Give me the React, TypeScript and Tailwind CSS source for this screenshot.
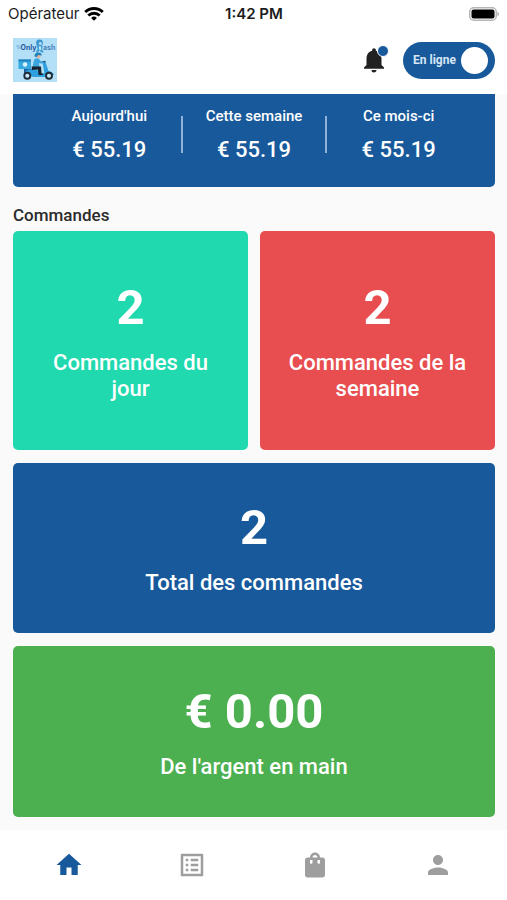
import { useState } from "react";
import clsx from "clsx";
import { MdHome, MdListAlt, MdNotifications, MdPerson, MdShoppingBag } from "react-icons/md";
import type { IconType } from "react-icons";

const earnings = [
	{ label: "Aujourd'hui", amount: "€ 55.19" },
	{ label: "Cette semaine", amount: "€ 55.19" },
	{ label: "Ce mois-ci", amount: "€ 55.19" },
];

const tabs: { id: string; label: string; icon: IconType }[] = [
	{ id: "home", label: "Accueil", icon: MdHome },
	{ id: "requests", label: "Demandes", icon: MdListAlt },
	{ id: "orders", label: "Commandes", icon: MdShoppingBag },
	{ id: "profile", label: "Profil", icon: MdPerson },
];

const StatusBar = () => (
	<div className="grid h-7 grid-cols-3 items-center bg-white pr-[7px] pl-2 font-['Inter',sans-serif] text-[15px] text-[#1c1c1c]">
		<div className="flex items-center gap-1">
			<span>Opérateur</span>
			<svg viewBox="0 0 20 14" className="h-3.5 w-5 shrink-0" fill="none" stroke="#000" strokeWidth="2.8">
				<path d="M1.2 5.1a12.6 12.6 0 0 1 17.6 0" />
				<path d="M4.3 8.6a8.1 8.1 0 0 1 11.4 0" />
				<path d="M10 13.8 7.1 10.9a4.1 4.1 0 0 1 5.8 0z" fill="#000" stroke="none" />
			</svg>
		</div>
		<span className="text-center font-semibold">1:42 PM</span>
		<svg viewBox="0 0 31 14" className="h-3.5 w-[31px] justify-self-end">
			<rect x="0.75" y="0.75" width="26.5" height="12.5" rx="4" fill="#fff" stroke="#b5b5b5" strokeWidth="1.5" />
			<rect x="2.5" y="2.5" width="23" height="9" rx="2" fill="#000" />
			<path d="M28.5 4.8c2 .8 2 3.6 0 4.4z" fill="#a5a5a5" />
		</svg>
	</div>
);

const Logo = () => (
	<svg viewBox="0 0 44 44" className="size-11" role="img" aria-label="OnlyDash">
		<rect width="44" height="44" fill="#b3e0f6" />
		{/* Brand name with the mascot in the middle */}
		<path d="M3.5 8h3M4.5 10h3" stroke="#5b8fc4" strokeWidth="0.8" />
		<text x="7.5" y="12" fontSize="7" fontWeight="700" fontFamily="Inter, sans-serif" fill="#2458a5">Only</text>
		<text x="30" y="12" fontSize="7" fontWeight="700" fontFamily="Inter, sans-serif" fill="#4a80ba">ash</text>
		<circle cx="26.5" cy="5" r="3.4" fill="#3c94d0" />
		<circle cx="27.3" cy="5.6" r="1.5" fill="#b7ddf0" />
		<path d="M23.5 8.5c2-1 5-1 6.500 0l-1 2.500 2 3.500h-3l-1.500-2-1.500 2h-2.500l2-3.500z" fill="#45a3db" />
		<path d="M26 8.500h1.800v3.500H26.500z" fill="#e2f5fc" />
		{/* Delivery box */}
		<rect x="5.5" y="21.5" width="12.5" height="9.5" fill="#36a9e0" />
		<path d="M5.500 21.500H18v2H5.500z" fill="#2382bd" />
		<circle cx="12" cy="26.5" r="2.2" fill="#dff4fc" />
		<path d="M11 31h9l2 6H11z" fill="#1d5f9c" />
		{/* Scooter */}
		<path d="M12 36c0-3 2-4.500 5-4.500h7l4 4.500 3.500-1-2-10.500 3-.5 3 9c3 .5 5 2 5.500 4h-5l-5 2H20z" fill="#2fa0df" />
		<path d="m28 24.500 4.500-1" stroke="#174774" strokeWidth="1.3" />
		<circle cx="14.3" cy="37.7" r="3" fill="#c9e9f8" stroke="#202b38" strokeWidth="1.9" />
		<circle cx="36" cy="37.7" r="3" fill="#c9e9f8" stroke="#202b38" strokeWidth="1.9" />
		{/* Rider */}
		<path d="M19.500 29l1.500-7c1-2 3.500-2.500 5-1l2 2.500 3 .5-.5 1.500-4.500-.3.5 3.800z" fill="#3aa5de" />
		<path d="M18.500 28.500H28l.5 7H30V37h-4.500L25 31.500l-6 .5z" fill="#17222f" />
		<circle cx="25.5" cy="18" r="2.2" fill="#e4b59c" />
		<path d="M21.500 18.500c-.5-5 7-5.500 7.500-1l-4-.5-1 2z" fill="#247eb9" />
	</svg>
);

const Header = () => {
	const [online, setOnline] = useState(true);

	return (
		<header className="flex h-[66px] items-center justify-between bg-white pr-3 pb-0.5 pl-[13px]">
			<Logo />
			<div className="flex items-center gap-3.5">
				<button type="button" aria-label="Notifications" className="relative cursor-pointer text-[#212121]">
					<MdNotifications size={30} />
					<span className="absolute top-0 right-0 size-3 rounded-full border border-white bg-[#18599b]" />
				</button>
				<label className={clsx("flex h-[37px] w-[92px] cursor-pointer items-center justify-between rounded-full pr-[7px] pl-2.5 text-xs font-bold text-[#d6e6f5]", online ? "bg-[#18599b]" : "flex-row-reverse bg-gray-400")}>
					<span>En ligne</span>
					<input
						type="checkbox"
						checked={online}
						onChange={(e) => setOnline(e.target.checked)}
						className="size-[27px] cursor-pointer appearance-none rounded-full bg-white"
					/>
				</label>
			</div>
		</header>
	);
};

const StatCard = ({ value, label, className }: { value: string; label: string; className: string }) => (
	<div className={clsx("flex flex-col items-center justify-center rounded-[5px] px-6 text-center text-white", className)}>
		<span className="text-[49px] leading-[56px] font-bold">{value}</span>
		<span className="mt-3.5 text-[22px] leading-[26px] font-medium">{label}</span>
	</div>
);

const App = () => {
	const [activeTab, setActiveTab] = useState("home");

	return (
		<div className="flex min-h-screen flex-col bg-[#fafafa] font-['Roboto',sans-serif]">
			<StatusBar />
			<Header />

			<main className="flex-1 pr-3 pb-[13px] pl-[13px]">
				{/* Earnings */}
				<section className="rounded-b-[5px] bg-[#18599b] px-6 pt-3 pb-[22px] text-white">
					<div className="grid grid-cols-3 items-center">
						{earnings.map((item, index) => (
							<div key={item.label} className="relative flex flex-col items-center gap-[9px]">
								{index > 0 && <span className="absolute top-2.5 -left-px h-[37px] w-0.5 bg-[#8fb2d6]" />}
								<span className="text-[15px] leading-5 font-medium">{item.label}</span>
								<span className="text-[22px] leading-[30px] font-medium">{item.amount}</span>
							</div>
						))}
					</div>
				</section>

				{/* Orders */}
				<h2 className="pt-[18px] pb-1.5 text-[17px] leading-5 font-medium text-[#2b2b2b]">Commandes</h2>
				<div className="grid grid-cols-2 gap-x-3 gap-y-[13px]">
					<StatCard value="2" label="Commandes du jour" className="h-[219px] bg-[#20d9ae]" />
					<StatCard value="2" label="Commandes de la semaine" className="h-[219px] bg-[#e84d4f]" />
					<StatCard value="2" label="Total des commandes" className="col-span-2 h-[170px] bg-[#18599b]" />
					<StatCard value="€ 0.00" label="De l'argent en main" className="col-span-2 h-[171px] bg-[#4caf50]" />
				</div>
			</main>

			<nav className="grid h-[70px] grid-cols-4 bg-white px-[7px]">
				{tabs.map(({ id, label, icon: Icon }) => (
					<button
						key={id}
						type="button"
						aria-label={label}
						onClick={() => setActiveTab(id)}
						className={clsx("flex cursor-pointer items-center justify-center", activeTab === id ? "text-[#18599b]" : "text-[#9e9e9e]")}
					>
						<Icon size={30} />
					</button>
				))}
			</nav>
		</div>
	);
};

export default App;
